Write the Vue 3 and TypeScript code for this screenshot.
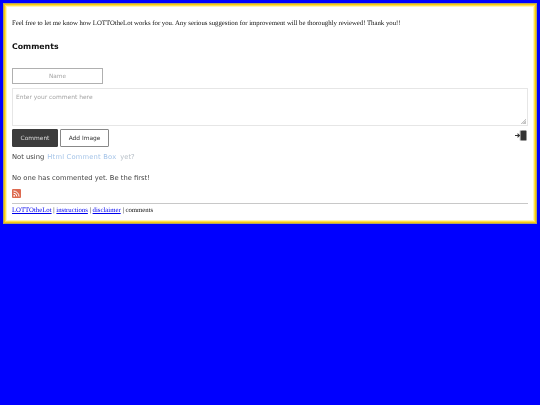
<script setup lang="ts">
const links = ['LOTTOtheLot', 'instructions', 'disclaimer']
</script>

<template>
  <div class="page">
    <main class="panel">
      <p class="intro">Feel free to let me know how LOTTOtheLot works for you. Any serious suggestion for improvement will be thoroughly reviewed! Thank you!!</p>
      <h2 class="title">Comments</h2>
      <input class="name" type="text" placeholder="Name" />
      <textarea class="comment" placeholder="Enter your comment here"></textarea>
      <div class="actions">
        <button class="btn primary">Comment</button>
        <button class="btn">Add Image</button>
        <svg class="login" viewBox="0 0 12 11" width="12" height="11">
          <rect x="6" y="0.5" width="5.5" height="10" rx="0.5" fill="#333" />
          <rect x="4.8" y="0.5" width="1.2" height="10" fill="#8a8a8a" />
          <path d="M0 5h2.6V3l2.6 2.5L2.6 8V6H0z" fill="#333" />
        </svg>
      </div>
      <p class="muted">Not using <a class="hcb">Html Comment Box</a><span class="yet">yet?</span></p>
      <p class="empty">No one has commented yet. Be the first!</p>
      <svg class="rss" viewBox="0 0 9 9" width="9" height="9">
        <rect width="9" height="9" rx="1" fill="#dd6a50" />
        <circle cx="2.2" cy="6.8" r="0.9" fill="#fff" />
        <path d="M1.5 4.2a3.3 3.3 0 0 1 3.3 3.3M1.5 2a5.5 5.5 0 0 1 5.5 5.5" fill="none" stroke="#fff" stroke-width="1" />
      </svg>
      <hr class="rule" />
      <nav class="nav">
        <template v-for="l in links" :key="l"><a class="nav-link">{{ l }}</a> | </template>comments
      </nav>
    </main>
  </div>
</template>

<style scoped>
.page {
  padding: 3px 3px 0;
  text-rendering: geometricPrecision;
  filter: blur(0.3px);
}
.panel {
  box-sizing: border-box;
  height: 221px;
  background: #fff;
  box-shadow:
    inset 0 0 0 1px #b3a560,
    inset 0 0 0 2px #f5c518,
    inset 0 0 0 3px #ffe34d,
    inset 0 0 0 4px #fff3b8;
  padding: 0 9px;
  display: flex;
  flex-direction: column;
  align-items: flex-start;
  font-family: "DejaVu Sans", Inter, sans-serif;
}
.intro {
  margin: 15px 0 0;
  font: 6.75px/12px "Liberation Serif", serif;
  color: #111;
}
.title {
  margin: 11px 0 0;
  font-size: 7.8px;
  line-height: 12px;
  font-weight: 700;
  color: #111;
}
.name {
  box-sizing: border-box;
  width: 91px;
  height: 16px;
  margin: 15px 0 0;
  padding: 0;
  border: 1px solid #b0b0b0;
  border-radius: 0;
  text-align: center;
  font: 5.8px "DejaVu Sans", sans-serif;
  outline: none;
}
.name::placeholder, .comment::placeholder {
  color: #a5a5a5;
}
.comment {
  box-sizing: border-box;
  display: block;
  width: 516px;
  height: 38px;
  margin: 4px 0 0;
  padding: 3px;
  border: 1px solid #e6e6e6;
  font: 5.95px/9px "DejaVu Sans", sans-serif;
  outline: none;
  resize: none;
  background: linear-gradient(135deg, transparent 50%, #c4c4c4 50%, #fff 70%, #c4c4c4 70%) no-repeat right 1px bottom 1px / 5px 5px #fff;
}
.actions {
  align-self: stretch;
  display: flex;
  align-items: flex-start;
  gap: 2px;
  margin-top: 3px;
}
.btn {
  box-sizing: border-box;
  height: 18px;
  width: 49px;
  padding: 0;
  border: 1px solid #888;
  border-radius: 1px;
  background: #fff;
  color: #333;
  font: 5.9px "DejaVu Sans", sans-serif;
}
.primary {
  width: 46px;
  background: #3c3c3c;
  border-color: #3c3c3c;
  color: #ddd;
}
.login {
  margin: 1px 1px 0 auto;
}
.muted, .empty {
  margin: 0;
  font-size: 6.75px;
  line-height: 10px;
  color: #444;
}
.muted {
  margin-top: 5px;
}
.hcb {
  color: #a5c4e8;
  margin: 0 4px 0 1px;
  letter-spacing: 0.18px;
}
.yet {
  color: #b8c0c8;
}
.empty {
  margin-top: 11px;
}
.rss {
  margin-top: 6px;
}
.rule {
  align-self: stretch;
  margin: 5px 0 0;
  border: 0;
  border-top: 1px solid #c8c8c8;
}
.nav {
  margin-top: 1px;
  font: 6.75px/12px "Liberation Serif", serif;
  color: #111;
}
.nav-link {
  color: #00e;
  text-decoration: underline;
}
</style>

<style>
html, body {
  background: #0000ff;
}
</style>
